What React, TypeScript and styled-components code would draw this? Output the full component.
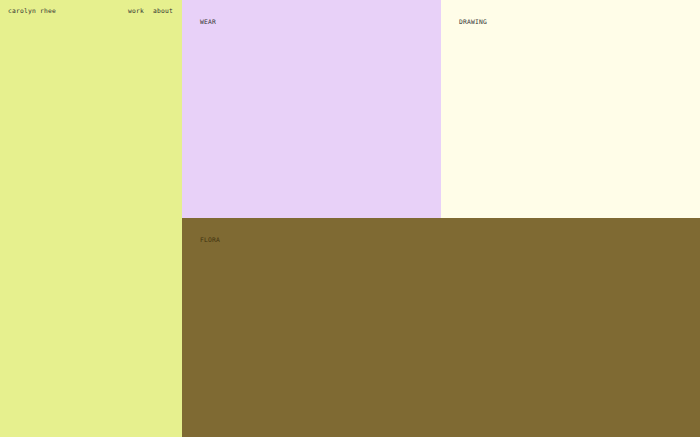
import styled, { createGlobalStyle } from 'styled-components';

const GlobalStyle = createGlobalStyle`
  html, body, #root {
    margin: 0;
    padding: 0;
    height: 100%;
  }
  body {
    font-family: 'DejaVu Sans Mono', 'Liberation Mono', monospace;
    color: #333;
  }
`;

const Page = styled('div')`
  display: grid;
  grid-template-columns: 182px 1fr;
  height: 100vh;
  overflow: hidden;
`;

const Sidebar = styled('aside')`
  background-color: #e6f08e;
  padding: 7px 9px 0 8px;
`;

const Header = styled('div')`
  display: flex;
  justify-content: space-between;
  align-items: center;
  font-size: 6.3px;
  letter-spacing: 0.2px;
`;

const Nav = styled('nav')`
  display: flex;
  gap: 9px;
`;

const NavLink = styled('a')`
  color: #333;
  text-decoration: none;
`;

const Projects = styled('main')`
  display: grid;
  grid-template-columns: 1fr 1fr;
  grid-template-rows: 218px 1fr;
`;

const Tile = styled('div')<{ $bg: string; $wide?: boolean }>`
  background-color: ${(p) => p.$bg};
  grid-column: ${(p) => (p.$wide ? '1 / -1' : 'auto')};
  padding: 18px 18px;
`;

const TileLabel = styled('div')<{ $color?: string }>`
  font-size: 6.3px;
  letter-spacing: 0.2px;
  text-transform: uppercase;
  color: ${(p) => p.$color || '#333'};
`;

const projects = [
  { name: 'wear', bg: '#e8d1f8' },
  { name: 'drawing', bg: '#fffde8' },
  { name: 'flora', bg: '#7f6a33', wide: true, color: '#3f3310' },
];

const App = () => {
  return (
    <>
      <GlobalStyle />
      <Page>
        <Sidebar>
          <Header>
            <span>carolyn rhee</span>
            <Nav>
              <NavLink href='#'>work</NavLink>
              <NavLink href='#'>about</NavLink>
            </Nav>
          </Header>
        </Sidebar>
        <Projects>
          {projects.map((p) => (
            <Tile key={p.name} $bg={p.bg} $wide={p.wide}>
              <TileLabel $color={p.color}>{p.name}</TileLabel>
            </Tile>
          ))}
        </Projects>
      </Page>
    </>
  );
};
export default App;
